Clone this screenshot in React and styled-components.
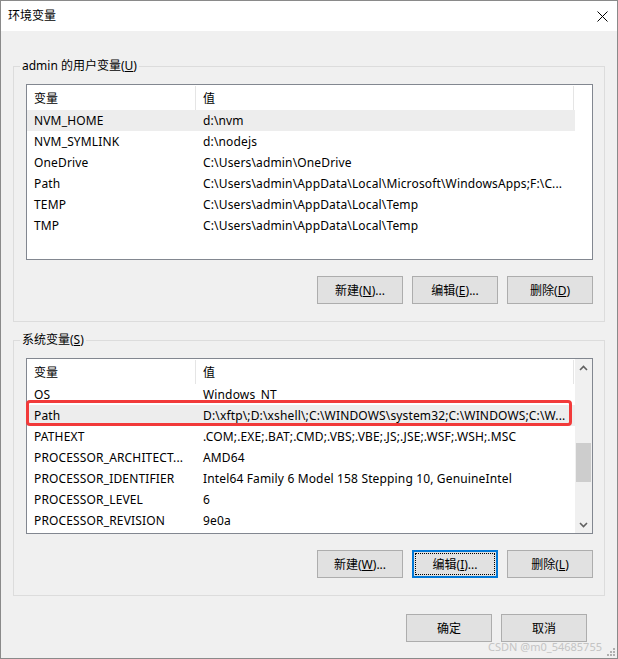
import React from 'react';
import styled, { createGlobalStyle, css } from 'styled-components';

const Global = createGlobalStyle`
  html, body { margin: 0; padding: 0; background: #fff; }
  body {
    font-family: "Noto Sans", "Noto Sans CJK SC", sans-serif;
    font-size: 12px;
    color: #000;
  }
  * { box-sizing: border-box; }
`;

const Window = styled.div`
  position: relative;
  width: 618px;
  height: 659px;
  border: 1px solid #8a8a8a;
  background: #f0f0f0;
  display: flex;
  flex-direction: column;
`;

const TitleBar = styled.div`
  height: 30px;
  flex-shrink: 0;
  background: #fff;
  display: flex;
  align-items: center;
  justify-content: space-between;
  padding-left: 7px;
`;

const Title = styled.span`
  font-size: 12px;
  line-height: 16px;
`;

const CloseBox = styled.div`
  width: 29px;
  height: 30px;
  display: flex;
  align-items: center;
  justify-content: center;
`;

const Body = styled.div`
  flex: 1;
  padding: 35px 12px 0;
  display: flex;
  flex-direction: column;
`;

const Group = styled.div`
  position: relative;
  border: 1px solid #dcdcdc;
  padding: 17px 11px 17px 12px;
  display: flex;
  flex-direction: column;
  gap: 16px;
  & + & { margin-top: 18px; }
`;

const Legend = styled.span`
  position: absolute;
  top: -9px;
  left: 6px;
  padding: 0 2px;
  background: #f0f0f0;
  line-height: 16px;
  font-size: 12px;
`;

const List = styled.div`
  position: relative;
  height: 176px;
  border: 1px solid #828790;
  background: #fff;
  display: flex;
`;

const ListContent = styled.div`
  flex: 1;
  min-width: 0;
  overflow: hidden;
`;

const HeaderRow = styled.div`
  display: grid;
  grid-template-columns: 169px 1fr;
  height: 25px;
  margin-right: 1px;
`;

const HeaderCell = styled.div`
  display: flex;
  align-items: center;
  padding-left: 7px;
  border-right: 1px solid #e5e5e5;
  margin-top: 1px;
`;

const Row = styled.div`
  display: grid;
  grid-template-columns: 169px 1fr;
  height: 21px;
  background: ${p => (p.$selected ? '#ededed' : 'transparent')};
`;

const Cell = styled.div`
  display: flex;
  align-items: center;
  padding-left: 7px;
  white-space: nowrap;
  overflow: hidden;
  letter-spacing: 0.15px;
`;

const ScrollCol = styled.div`
  width: 17px;
  flex-shrink: 0;
  background: ${p => (p.$visible ? '#f0f0f0' : '#fff')};
  display: flex;
  flex-direction: column;
`;

const ArrowBox = styled.div`
  height: 17px;
  display: flex;
  align-items: center;
  justify-content: center;
`;

const Track = styled.div`
  flex: 1;
  display: flex;
  flex-direction: column;
`;

const Thumb = styled.div`
  margin: 67px 1px 0;
  height: 39px;
  background: #cdcdcd;
`;

const Highlight = styled.div`
  position: absolute;
  left: -1px;
  top: 41px;
  width: 546px;
  height: 26px;
  border: 3px solid #f23a3a;
  border-radius: 4px;
  pointer-events: none;
`;

const ButtonRow = styled.div`
  display: flex;
  justify-content: flex-end;
  gap: 9px;
`;

const Footer = styled(ButtonRow)`
  margin-top: 18px;
  padding-right: 18px;
`;

const Button = styled.button`
  width: 86px;
  height: 28px;
  padding: 0;
  background: #e1e1e1;
  border: 1px solid #adadad;
  font-family: inherit;
  font-size: 12px;
  color: #000;
  display: flex;
  align-items: center;
  justify-content: center;
  ${p =>
    p.$focused &&
    css`
      border: 2px solid #0078d7;
      outline: 1px dotted #000;
      outline-offset: -4px;
    `}
`;

const Watermark = styled.div`
  position: absolute;
  right: 15px;
  bottom: 4px;
  font-size: 11px;
  line-height: 14px;
  color: #c4c4c4;
`;

const Grip = styled.div`
  position: absolute;
  right: 1px;
  bottom: 1px;
  width: 10px;
  height: 10px;
  display: flex;
`;

const userVars = [
  ['NVM_HOME', 'd:\\nvm', true],
  ['NVM_SYMLINK', 'd:\\nodejs'],
  ['OneDrive', 'C:\\Users\\admin\\OneDrive'],
  ['Path', 'C:\\Users\\admin\\AppData\\Local\\Microsoft\\WindowsApps;F:\\C...'],
  ['TEMP', 'C:\\Users\\admin\\AppData\\Local\\Temp'],
  ['TMP', 'C:\\Users\\admin\\AppData\\Local\\Temp'],
];

const sysVars = [
  ['OS', 'Windows_NT'],
  ['Path', 'D:\\xftp\\;D:\\xshell\\;C:\\WINDOWS\\system32;C:\\WINDOWS;C:\\W...', true],
  ['PATHEXT', '.COM;.EXE;.BAT;.CMD;.VBS;.VBE;.JS;.JSE;.WSF;.WSH;.MSC'],
  ['PROCESSOR_ARCHITECT...', 'AMD64'],
  ['PROCESSOR_IDENTIFIER', 'Intel64 Family 6 Model 158 Stepping 10, GenuineIntel'],
  ['PROCESSOR_LEVEL', '6'],
  ['PROCESSOR_REVISION', '9e0a'],
];

const Chevron = ({ down }) => (
  <svg width="9" height="6" viewBox="0 0 9 6">
    <path
      d={down ? 'M1 1 L4.5 4.5 L8 1' : 'M1 5 L4.5 1.5 L8 5'}
      fill="none"
      stroke="#606060"
      strokeWidth="1.6"
    />
  </svg>
);

const VarList = ({ rows, scroll, highlight }) => (
  <List>
    <ListContent>
      <HeaderRow>
        <HeaderCell>变量</HeaderCell>
        <HeaderCell>值</HeaderCell>
      </HeaderRow>
      {rows.map(([k, v, sel]) => (
        <Row key={k} $selected={sel}>
          <Cell>{k}</Cell>
          <Cell>{v}</Cell>
        </Row>
      ))}
    </ListContent>
    <ScrollCol $visible={scroll}>
      {scroll && (
        <>
          <ArrowBox><Chevron /></ArrowBox>
          <Track><Thumb /></Track>
          <ArrowBox><Chevron down /></ArrowBox>
        </>
      )}
    </ScrollCol>
    {highlight && <Highlight />}
  </List>
);

const Label = ({ text, k, tail = '' }) => (
  <>
    {text}(<u>{k}</u>){tail}
  </>
);

export default function App() {
  return (
    <>
      <Global />
      <Window>
        <TitleBar>
          <Title>环境变量</Title>
          <CloseBox>
            <svg width="11" height="11" viewBox="0 0 11 11">
              <path d="M0.5 0.5 L10.5 10.5 M10.5 0.5 L0.5 10.5" stroke="#000" strokeWidth="1" />
            </svg>
          </CloseBox>
        </TitleBar>
        <Body>
          <Group>
            <Legend>
              admin 的用户变量(<u>U</u>)
            </Legend>
            <VarList rows={userVars} />
            <ButtonRow>
              <Button><Label text="新建" k="N" tail="..." /></Button>
              <Button><Label text="编辑" k="E" tail="..." /></Button>
              <Button><Label text="删除" k="D" /></Button>
            </ButtonRow>
          </Group>
          <Group>
            <Legend>
              系统变量(<u>S</u>)
            </Legend>
            <VarList rows={sysVars} scroll highlight />
            <ButtonRow>
              <Button><Label text="新建" k="W" tail="..." /></Button>
              <Button $focused><Label text="编辑" k="I" tail="..." /></Button>
              <Button><Label text="删除" k="L" /></Button>
            </ButtonRow>
          </Group>
          <Footer>
            <Button>确定</Button>
            <Button>取消</Button>
          </Footer>
        </Body>
        <Watermark>CSDN @m0_54685755</Watermark>
        <Grip>
          <svg width="10" height="10" viewBox="0 0 10 10">
            {[[7, 1], [4, 4], [7, 4], [1, 7], [4, 7], [7, 7]].map(([x, y]) => (
              <rect key={`${x}-${y}`} x={x} y={y} width="2" height="2" fill="#b0b0b0" />
            ))}
          </svg>
        </Grip>
      </Window>
    </>
  );
}
